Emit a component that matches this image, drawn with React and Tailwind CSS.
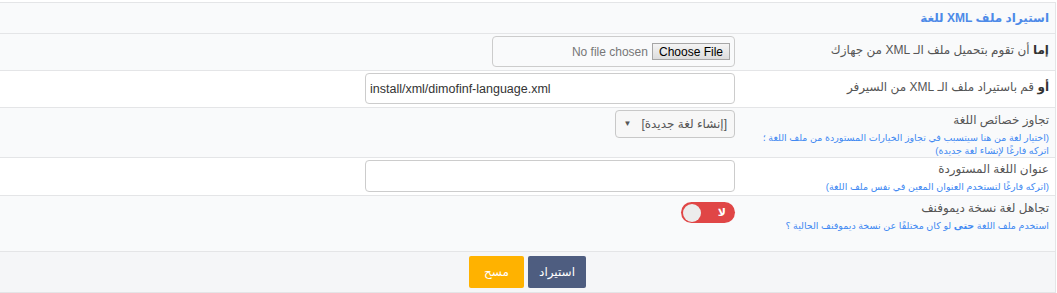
import React from 'react';

function Row({ label, hint, children, className = '', labelTop = 'pt-[7px]' }) {
  return (
    <div className={`flex border-b border-[#e4e5e7] ${className}`}>
      <div className={`w-[305px] shrink-0 pr-[6px] ${labelTop}`}>
        <div className="whitespace-nowrap text-[12px] leading-[18px] text-[#555]">{label}</div>
        {hint && <div className="mt-[2px] whitespace-nowrap text-[9.5px] leading-[13px] text-[#4189f2]">{hint}</div>}
      </div>
      <div className="flex-1 pr-[15px] pt-[2px]">{children}</div>
    </div>
  );
}

function FileBox() {
  return (
    <div className="flex h-[31px] w-[243px] items-center gap-[4px] rounded-[4px] border border-[#ccc] pr-[4px] font-['Liberation_Sans',sans-serif] text-[12px]">
      <span className="flex h-[17px] items-center border border-[#a6a6a6] bg-gradient-to-b from-[#f4f4f4] to-[#dddddd] px-[6px] text-[12px] text-black">
        Choose File
      </span>
      <span className="text-[#777]">No file chosen</span>
    </div>
  );
}

function Toggle() {
  return (
    <div className="mt-[4px] flex h-[21px] w-[54px] items-center justify-between rounded-full bg-[#e04646] pl-[2px] pr-[9px]">
      <span className="text-[11px] font-bold text-white">لا</span>
      <span className="h-[18px] w-[18px] rounded-full bg-[#ececec]" />
    </div>
  );
}

export default function App() {
  return (
    <div dir="rtl" className="w-[1056px] bg-white pt-[2px] font-['Liberation_Sans','DejaVu_Sans',sans-serif]">
      <div className="border-r border-t border-[#e4e5e7]">
        <div className="flex h-[31px] items-center border-b border-[#e4e5e7] bg-[#f9fafb] pr-[6px] text-[12px] font-bold text-[#4d8ae8]">
          استيراد ملف XML للغة
        </div>

        <Row className="h-[37px] bg-[#f9fafb]" label={<><b className="text-[#333]">إما</b> أن تقوم بتحميل ملف الـ XML من جهازك</>}>
          <FileBox />
        </Row>

        <Row className="h-[37px] bg-white" label={<><b className="text-[#333]">أو</b> قم باستيراد ملف الـ XML من السيرفر</>}>
          <input
            dir="ltr"
            readOnly
            value="install/xml/dimofinf-language.xml"
            className="h-[31px] w-[370px] rounded-[4px] border border-[#ccc] bg-white px-[4px] font-['Liberation_Sans',sans-serif] text-[12.5px] text-[#333] outline-none"
          />
        </Row>

        <Row
          className="h-[50px] bg-[#f9fafb]"
          labelTop="pt-[3px]"
          label="تجاوز خصائص اللغة"
          hint={<>(اختيار لغة من هنا سيتسبب في تجاوز الخيارات المستوردة من ملف اللغة ؛<br />اتركه فارغًا لإنشاء لغة جديدة)</>}
        >
          <div className="inline-flex h-[28px] items-center gap-[10px] rounded-[4px] border border-[#c8c8c8] bg-[#f7f7f7] pl-[8px] pr-[7px] text-[12px] text-[#555]">
            <span>[إنشاء لغة جديدة]</span>
            <span className="text-[8px] text-[#555]">▼</span>
          </div>
        </Row>

        <Row
          className="h-[38px] bg-white"
          labelTop="pt-[2px]"
          label="عنوان اللغة المستوردة"
          hint="(اتركه فارغًا لتستخدم العنوان المعين في نفس ملف اللغة)"
        >
          <input className="h-[32px] w-[370px] rounded-[4px] border border-[#ccc] bg-white outline-none" />
        </Row>

        <Row
          className="h-[56px] bg-[#f9fafb]"
          labelTop="pt-[3px]"
          label="تجاهل لغة نسخة ديموفنف"
          hint={<>استخدم ملف اللغة <b>حتى</b> لو كان مختلفًا عن نسخة ديموفنف الحالية ؟</>}
        >
          <Toggle />
        </Row>

        <div className="flex h-[41px] items-center justify-center gap-[4px] border-b border-[#e4e5e7] bg-[#f5f6f8]">
          <button className="h-[32px] w-[58px] rounded-[2px] bg-[#4e5d80] text-[12px] text-white">استيراد</button>
          <button className="h-[32px] w-[55px] rounded-[2px] bg-[#ffb200] text-[12px] text-white">مسح</button>
        </div>
      </div>
    </div>
  );
}
